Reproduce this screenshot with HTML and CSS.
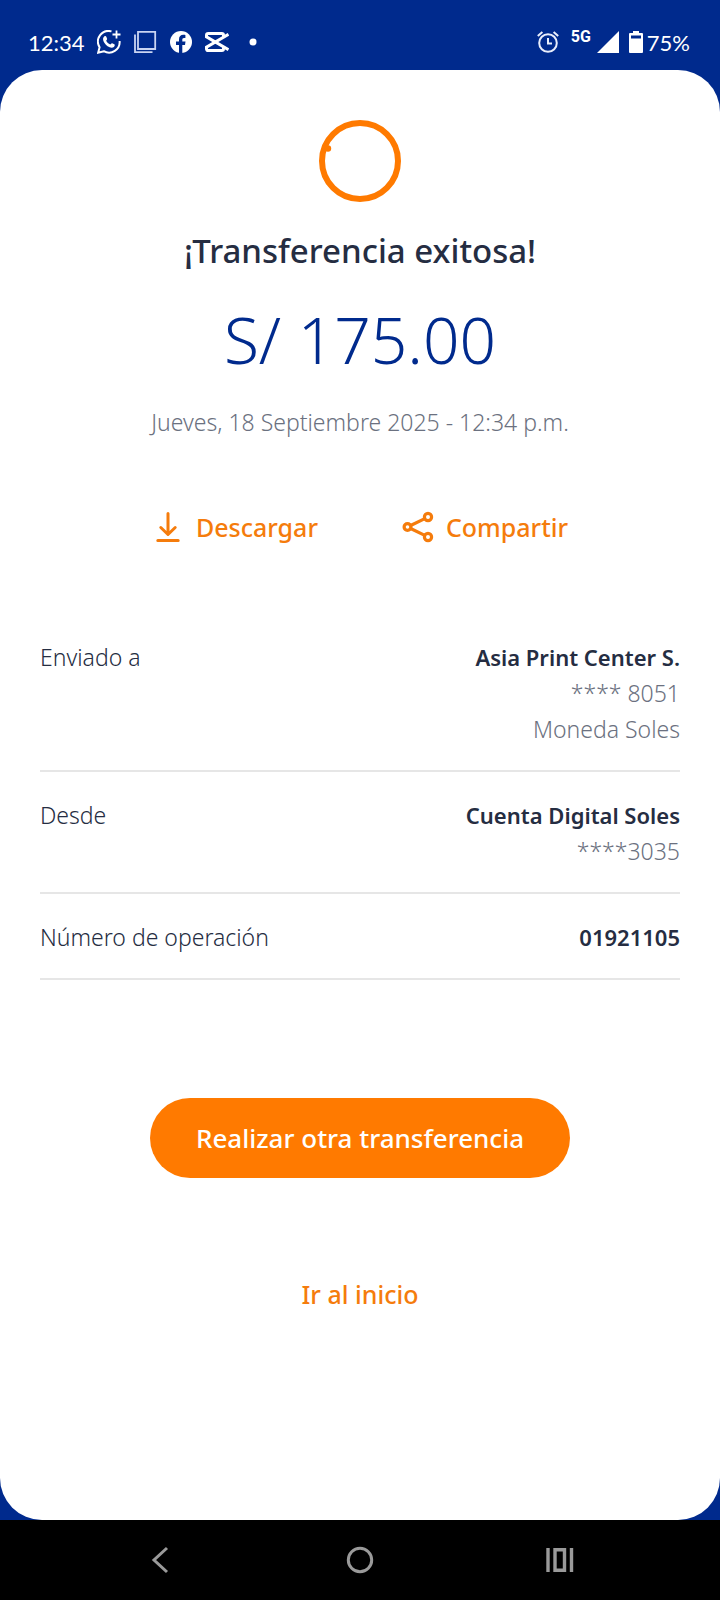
FILE: index.html
```
<!DOCTYPE html>
<html lang="es">
<head>
    <meta charset="UTF-8">
    <meta name="viewport" content="width=device-width, initial-scale=1">
    <title>Transferencia exitosa</title>
    <link rel="stylesheet" href="styles.css">
</head>
<body>

<header class="status-bar">
    <div class="status-left">
        <span class="clock">12:34</span>
        <svg width="24" height="24" viewBox="0 0 24 24" fill="none" stroke="#fff" stroke-width="2">
            <path d="M14.5 1.4A10.6 10.6 0 0 0 2.6 17.2L1.2 22.6L6.8 21.2A10.6 10.6 0 0 0 22.6 11"/>
            <path d="M19.5 0.5V8.5M15.5 4.5H23.5" stroke-width="1.8"/>
            <path d="M7.2 6.6C8 5.8 9 6 9.3 6.8L10.1 8.8C10.3 9.5 9.5 10.2 9.2 10.8C10.1 12.5 11.4 13.8 13.2 14.6C13.9 14.2 14.5 13 15.2 13.3L17.3 14.3C18.2 14.8 17.7 16.2 16.9 16.9C15.7 17.9 14 17.8 12.6 17.2C9.7 16 7.6 13.8 6.5 11.2C5.8 9.5 5.9 7.8 7.2 6.6Z" fill="#fff" stroke="none"/>
        </svg>
        <svg width="24" height="24" viewBox="0 0 24 24" fill="none" stroke="#c9d4f2" stroke-width="1.8">
            <path d="M5 1.8H22.2V19H5Z"/>
            <path d="M2 4.5V22.2H19.5"/>
        </svg>
        <svg width="24" height="24" viewBox="0 0 24 24">
            <circle cx="12" cy="12" r="11" fill="#fff"/>
            <path d="M10 23V15H7V11.6H10V9.2C10 6.4 11.7 4.8 14.3 4.8C15.3 4.8 16.4 5 16.4 5V8H15C13.7 8 13.3 8.8 13.3 9.6V11.6H16.5L16 15H13.3V23Z" fill="#002a8d"/>
        </svg>
        <svg width="24" height="24" viewBox="0 0 24 24" fill="none" stroke="#fff" stroke-width="3">
            <path d="M18.5 7V5.2Q18.5 3.5 16.8 3.5H3.2Q1.5 3.5 1.5 5.2V6.8L23.5 19.6"/>
            <path d="M18.5 17V18.8Q18.5 20.5 16.8 20.5H3.2Q1.5 20.5 1.5 18.8V17.2L23.5 4.4"/>
        </svg>
        <svg width="24" height="24" viewBox="0 0 24 24">
            <circle cx="12" cy="12" r="3.5" fill="#fff"/>
        </svg>
    </div>
    <div class="status-right">
        <svg class="alarm" width="22" height="22" viewBox="0 0 22 22" fill="none" stroke="#e8edfb" stroke-width="2">
            <circle cx="11" cy="12" r="8.8"/>
            <path d="M11 7V12.6H15M0.8 5L5.4 1M21.2 5L16.6 1"/>
        </svg>
        <span class="network">5G</span>
        <svg class="signal" width="22" height="22" viewBox="0 0 22 22">
            <path d="M0 22L22 0V22Z" fill="#fff"/>
        </svg>
        <svg width="14" height="22" viewBox="0 0 14 22">
            <path d="M4 0H10V2H13Q14 2 14 3V21Q14 22 13 22H1Q0 22 0 21V3Q0 2 1 2H4Z" fill="#fff"/>
            <path d="M2 4.5H12V7.5H2Z" fill="#002a8d"/>
        </svg>
        <span class="battery">75%</span>
    </div>
</header>

<main class="card">
    <svg class="progress" width="84" height="84" viewBox="0 0 84 84">
        <circle cx="42" cy="42" r="38" fill="none" stroke="#ff7a00" stroke-width="6"/>
        <circle cx="10" cy="29.5" r="3.2" fill="#ff7a00"/>
    </svg>
    <h1>¡Transferencia exitosa!</h1>
    <p class="amount">S/ 175.00</p>
    <p class="date">Jueves, 18 Septiembre 2025 - 12:34 p.m.</p>

    <div class="actions">
        <button type="button" class="btn-action">
            <svg width="32" height="32" viewBox="0 0 32 32" fill="none" stroke="#f57c0c" stroke-width="3" stroke-linecap="round" stroke-linejoin="round">
                <path d="M16 2.5V23M8.8 16.5L16 23.5L23.2 16.5M5.8 29.5H26.2"/>
            </svg>
            Descargar
        </button>
        <button type="button" class="btn-action">
            <svg width="32" height="32" viewBox="0 0 32 32" fill="none" stroke="#f57c0c" stroke-width="3.2">
                <circle cx="5.5" cy="16" r="3.4"/>
                <circle cx="26" cy="6" r="3.6"/>
                <circle cx="26" cy="26" r="3.6"/>
                <path d="M8.6 14.5L22.8 7.6M8.6 17.5L22.8 24.4"/>
            </svg>
            Compartir
        </button>
    </div>

    <dl class="details">
        <div class="row">
            <dt>Enviado a</dt>
            <dd><strong>Asia Print Center S.</strong></dd>
            <dd>**** 8051</dd>
            <dd>Moneda Soles</dd>
        </div>
        <div class="row">
            <dt>Desde</dt>
            <dd><strong>Cuenta Digital Soles</strong></dd>
            <dd>****3035</dd>
        </div>
        <div class="row">
            <dt>Número de operación</dt>
            <dd><strong>01921105</strong></dd>
        </div>
    </dl>

    <button type="button" class="btn-primary">Realizar otra transferencia</button>
    <a href="#" class="home-link">Ir al inicio</a>
</main>

<nav class="nav-bar">
    <button type="button" aria-label="Atrás">
        <svg width="28" height="28" viewBox="0 0 28 28" fill="none" stroke="#9a9a9a" stroke-width="3">
            <path d="M21 2L8 14L21 26"/>
        </svg>
    </button>
    <button type="button" aria-label="Inicio">
        <svg width="28" height="28" viewBox="0 0 28 28" fill="none" stroke="#9a9a9a" stroke-width="3">
            <circle cx="14" cy="14" r="11.7"/>
        </svg>
    </button>
    <button type="button" aria-label="Recientes">
        <svg width="28" height="28" viewBox="0 0 28 28" fill="none" stroke="#9a9a9a" stroke-width="3.4">
            <path d="M2 2V26M9 3.7H18.5V24.3H9ZM25.5 2V26"/>
        </svg>
    </button>
</nav>

</body>
</html>
```
FILE: styles.css
```
* { box-sizing: border-box; }
body { margin: 0; min-height: 100vh; display: flex; flex-direction: column; background-color: #002a8d; color: #252d42; font-family: "Noto Sans", sans-serif; font-size: 24px; }
svg { display: block; flex: none; }
button { border: none; background: none; padding: 0; font-family: inherit; cursor: pointer; }

/* status bar */
.status-bar { display: flex; justify-content: space-between; height: 70px; padding: 14px 30px 0 28px; color: #fff; font-family: Lato, sans-serif; }
.status-left, .status-right { display: flex; align-items: center; }
.status-left { gap: 12px; }
.clock, .battery { font-size: 22px; }
.network { margin: 0 6px 10px 12px; font-family: Roboto, sans-serif; font-size: 16px; font-weight: 700; line-height: 12px; }
.signal { margin-right: 10px; }
.battery { margin-left: 4px; }

/* card */
.card { flex: 1; display: flex; flex-direction: column; align-items: center; padding: 49px 40px; border-radius: 42px; background-color: #fff; }
h1 { margin: 28px 0 0; font-size: 33px; line-height: 40px; font-weight: 500; }
.amount { margin: 29px 0 0; color: #002a8d; font-size: 64px; line-height: 80px; font-weight: 350; }
.date { margin: 24px 0 0; color: #6b7180; font-size: 23px; line-height: 36px; font-weight: 350; }

.actions { display: flex; justify-content: center; gap: 84px; margin-top: 69px; }
.btn-action { display: flex; align-items: center; gap: 12px; color: #f57c0c; font-size: 25px; line-height: 36px; font-weight: 500; }

.details { width: 100%; margin: 69px 0 0; font-size: 23px; line-height: 36px; font-weight: 350; }
.row { display: grid; grid-template-columns: auto 1fr; padding: 25px 0 23px; border-bottom: 2px solid #e6e6e6; }
.row dd { grid-column: 2; margin: 0; text-align: right; color: #6b7180; }
.row strong { color: #252d42; font-size: 22px; font-weight: 600; }

.btn-primary { height: 80px; margin-top: 118px; padding: 0 46px; border-radius: 40px; background-color: #ff7a00; color: #fff; font-size: 26px; font-weight: 500; }
.home-link { margin-top: 98px; color: #f57c0c; font-size: 25px; line-height: 36px; font-weight: 500; text-decoration: none; }

/* android navigation */
.nav-bar { display: grid; grid-template-columns: repeat(3, 1fr); height: 80px; padding: 0 60px; background-color: #000; }
.nav-bar button { display: flex; align-items: center; justify-content: center; }
```
